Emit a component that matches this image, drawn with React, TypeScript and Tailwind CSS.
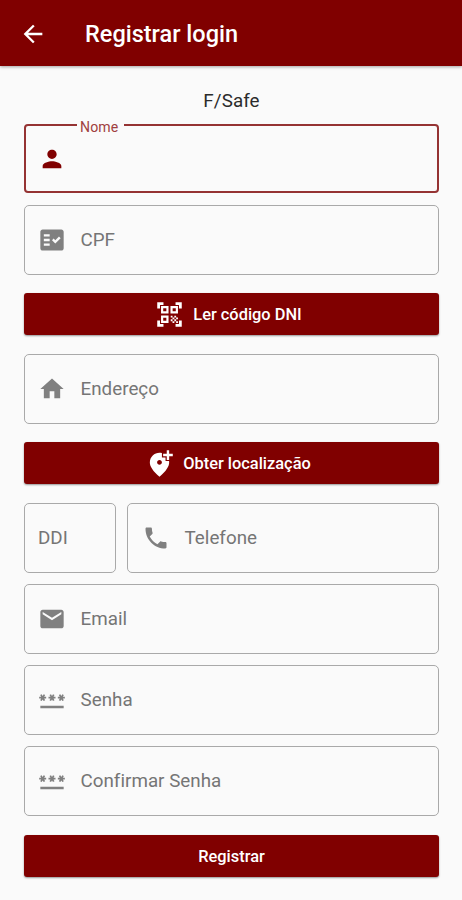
import type { ReactNode } from 'react';
import {
  MdAddLocationAlt,
  MdArrowBack,
  MdEmail,
  MdFactCheck,
  MdHome,
  MdPassword,
  MdPerson,
  MdPhone,
} from 'react-icons/md';

type FieldProps = { label: string; icon?: ReactNode; className?: string };

function QrScanIcon() {
  return (
    <svg viewBox="0 0 24 24" width="1em" height="1em" fill="none" stroke="currentColor">
      <path
        strokeWidth="2.3"
        d="M3 7V3h4M17 3h4v4M21 17v4h-4M7 21H3v-4"
      />
      <path
        strokeWidth="1.8"
        d="M5.9 5.9h4.4v4.4H5.9zM13.7 5.9h4.4v4.4h-4.4zM5.9 13.7h4.4v4.4H5.9z"
      />
      <path
        fill="currentColor"
        stroke="none"
        d="M13 13h1.5v1.5H13zM14.5 14.5H16V16h-1.5zM16 13h1.5v1.5H16zM13 16h1.5v1.5H13zM14.5 17.5H16V19h-1.5zM16 16h1.5v1.5H16zM17.5 14.5H19V16h-1.5zM17.5 17.5H19V19h-1.5z"
      />
    </svg>
  );
}

function Field({ label, icon, className = '' }: FieldProps) {
  return (
    <div
      className={`flex h-[70px] items-center rounded-[5px] border border-[#a9a9a9] pl-[13px] text-[18.8px] leading-none tracking-[0.02px] text-[#757575] ${className}`}
    >
      {icon && <span className="mr-[14.5px] text-[28px] text-[#808080]">{icon}</span>}
      <span>{label}</span>
    </div>
  );
}

function ActionButton({ label, icon, className = '' }: FieldProps) {
  return (
    <button
      className={`flex h-[42px] w-full items-center justify-center gap-[9px] rounded-[3px] bg-[#800000] text-[16.4px] leading-none font-medium text-white shadow-[0_1px_2px_rgba(0,0,0,0.4)] ${className}`}
    >
      {icon && <span className="text-[29px]">{icon}</span>}
      <span className="pt-[2px]">{label}</span>
    </button>
  );
}

export default function App() {
  return (
    <div className="h-[900px] w-[462px] overflow-hidden bg-[#fafafa] font-[Roboto,sans-serif]">
      <header className="flex h-[66px] items-center bg-[#800000] pl-[19px] text-white shadow-[0_1px_3px_rgba(0,0,0,0.35)]">
        <MdArrowBack className="mt-[1px] text-[28px]" />
        <h1 className="ml-[38px] pt-[4px] text-[23.5px] leading-none font-medium">Registrar login</h1>
      </header>

      <main className="flex flex-col pr-[23px] pl-[24px]">
        <p className="mt-[24px] h-[34px] text-center text-[18.8px] leading-[22px] tracking-[0.1px] text-[#2b2b2b]">
          F/Safe
        </p>

        <div className="relative flex h-[69px] items-center rounded-[4px] border-2 border-[#953333] pl-[12px] text-[#800000]">
          <span className="absolute -top-[6px] left-[51px] bg-[#fafafa] pr-[6px] pl-[3px] text-[14.1px] leading-[14px] tracking-[0.1px] text-[#a04040]">
            Nome
          </span>
          <MdPerson className="text-[28px]" />
        </div>

        <Field className="mt-[12px]" label="CPF" icon={<MdFactCheck />} />
        <ActionButton className="mt-[18px] pr-[6px]" label="Ler código DNI" icon={<QrScanIcon />} />
        <Field className="mt-[19px]" label="Endereço" icon={<MdHome />} />
        <ActionButton className="mt-[18px] pr-[7px]" label="Obter localização" icon={<MdAddLocationAlt />} />

        <div className="mt-[19px] flex gap-[11px]">
          <Field className="w-[92px]" label="DDI" />
          <Field className="flex-1 pl-[14px]" label="Telefone" icon={<MdPhone />} />
        </div>

        <Field className="mt-[11px]" label="Email" icon={<MdEmail />} />
        <Field className="mt-[11px]" label="Senha" icon={<MdPassword />} />
        <Field className="mt-[11px]" label="Confirmar Senha" icon={<MdPassword />} />
        <ActionButton className="mt-[19px]" label="Registrar" />
      </main>
    </div>
  );
}
